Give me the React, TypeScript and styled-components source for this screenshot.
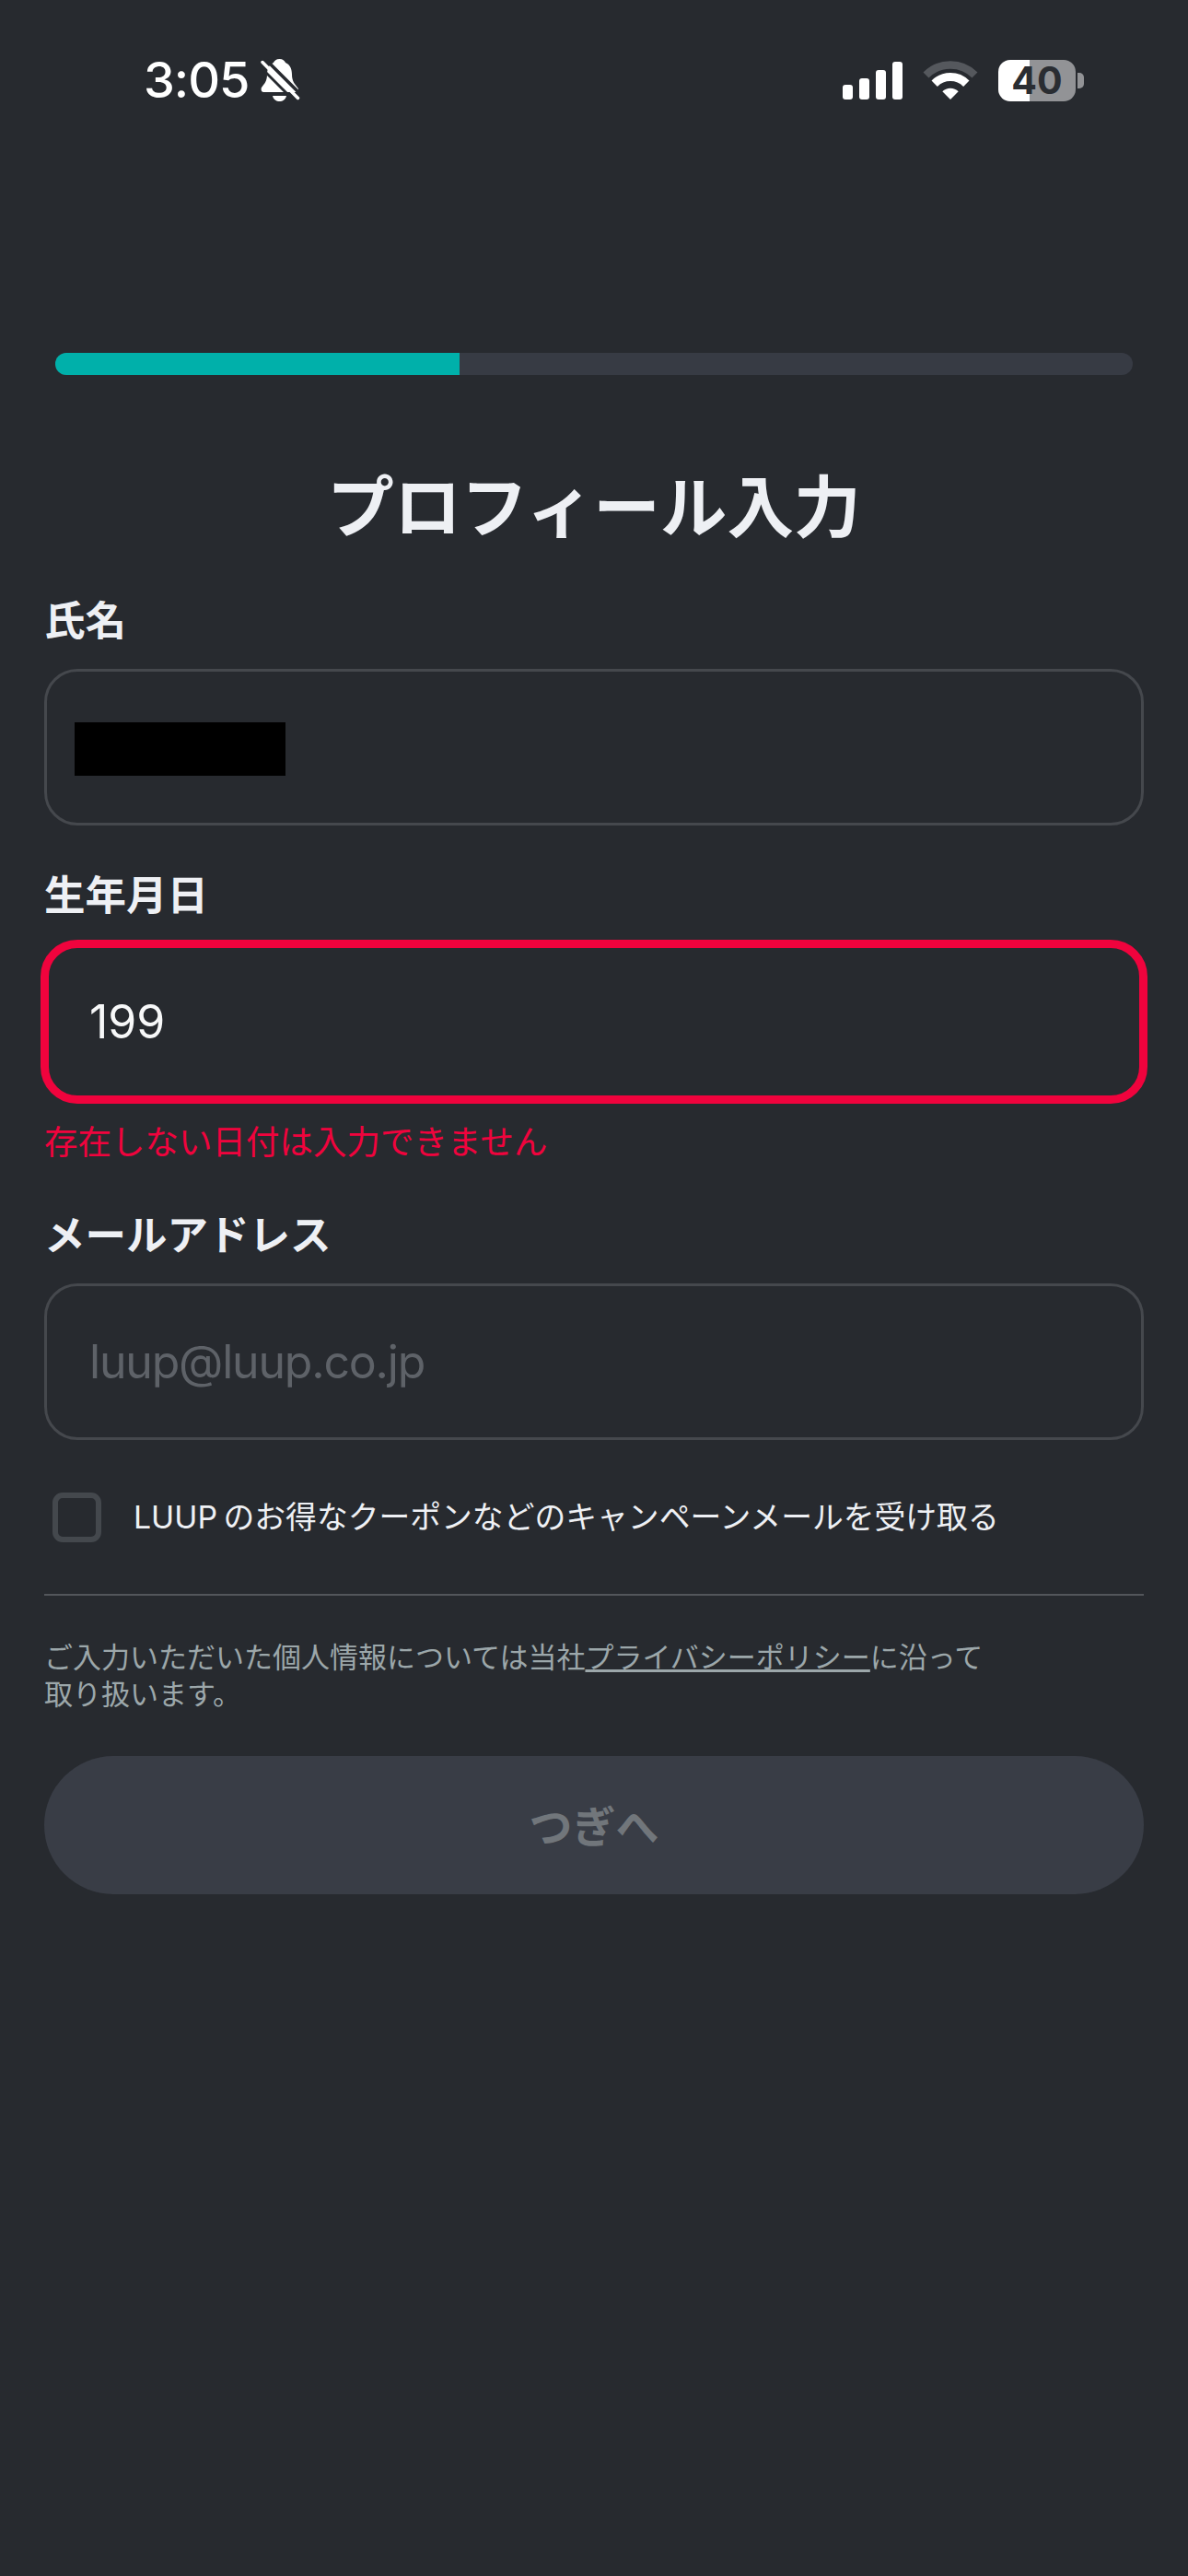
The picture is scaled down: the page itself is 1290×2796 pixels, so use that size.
import styled, { createGlobalStyle } from "styled-components";

const FONT = `Inter, "Noto Sans CJK JP", "Noto Sans", sans-serif`;

const GlobalStyle = createGlobalStyle`
  html, body { margin: 0; padding: 0; background: #272a2f; }
  * { box-sizing: border-box; }
`;

const Screen = styled.div`
  width: 1290px;
  height: 2796px;
  background: #272a2f;
  font-family: ${FONT};
  overflow: hidden;
`;

const StatusBar = styled.div`
  height: 176px;
  padding: 55px 122px 0 156px;
  display: flex;
  justify-content: space-between;
  align-items: flex-start;
  color: #fff;
`;

const TimeGroup = styled.div`
  display: flex;
  align-items: center;
  gap: 13px;
`;

const Time = styled.span`
  font-size: 54px;
  line-height: 64px;
  font-weight: 500;
  letter-spacing: -1px;
`;

const StatusIcons = styled.div`
  display: flex;
  align-items: center;
  gap: 22px;
  height: 64px;
`;

const ProgressTrack = styled.div`
  margin: 207px 60px 0;
  height: 24px;
  border-radius: 12px;
  background: #373b44;
  overflow: hidden;
`;

const ProgressFill = styled.div<{ $pct: number }>`
  width: ${(p) => p.$pct}%;
  height: 100%;
  background: #00b0aa;
`;

const Title = styled.h1`
  margin: 97px 0 0;
  text-align: center;
  font-size: 72.6px;
  line-height: 94px;
  font-weight: 700;
  color: #eef0f4;
`;

const Form = styled.div`
  padding: 0 48px;
`;

const Label = styled.div`
  margin-top: 44px;
  font-size: 44.5px;
  line-height: 64px;
  font-weight: 700;
  color: #eef0f4;
`;

const Field = styled.div<{ $error?: boolean }>`
  margin: ${(p) => (p.$error ? "16px -4px -4px" : "20px 0 0")};
  height: ${(p) => (p.$error ? "178px" : "170px")};
  padding: 0 ${(p) => (p.$error ? "44px" : "46px")};
  display: flex;
  align-items: center;
  border: ${(p) => (p.$error ? "9px solid #f0033d" : "3px solid #45484d")};
  border-radius: ${(p) => (p.$error ? "40px" : "36px")};
  font-size: 50px;
  color: #f7f8f9;
`;

const Masked = styled.div`
  width: 229px;
  height: 58px;
  margin: 4px 0 0 -16px;
  background: #000;
`;

const Placeholder = styled.span`
  color: #5e6268;
  letter-spacing: -1.2px;
`;

const ErrorText = styled.div`
  margin-top: 21px;
  font-size: 36.5px;
  line-height: 50px;
  color: #f0033d;
`;

const CheckRow = styled.div`
  margin-top: 57px;
  display: flex;
  align-items: center;
  gap: 35px;
  padding-left: 9px;
  font-size: 33.8px;
  line-height: 54px;
  word-spacing: -3px;
  color: #eef0f4;
`;

const CheckBox = styled.div`
  width: 53px;
  height: 54px;
  border: 6px solid #44484d;
  border-radius: 11px;
`;

const Divider = styled.div`
  margin-top: 56px;
  height: 2px;
  background: #53565b;
`;

const Note = styled.p`
  margin: 47px 0 0;
  font-size: 31px;
  line-height: 40px;
  color: #9ca7aa;

  a {
    color: inherit;
    text-decoration: underline;
  }
`;

const NextButton = styled.div`
  margin-top: 47px;
  height: 150px;
  padding-bottom: 4px;
  border-radius: 75px;
  background: #393d46;
  color: #71767b;
  font-size: 47px;
  font-weight: 700;
  display: flex;
  align-items: center;
  justify-content: center;
`;

const MutedBell = () => (
  <svg width="43" height="47" viewBox="0 0 43 47" fill="none">
    <path
      d="M20.5 0C24 0 26 2 27 4C32 6 34 11 34 17C34 24 37 27 40 31C42 33 41 36 38 36L3 36C1 36 0 33 1 31C4 27 7 24 7 17C7 11 9 6 14 4C15 2 17 0 20.500 0Z"
      fill="#fff"
    />
    <path d="M13 40H28C27 44 24 46 20.500 46C17 46 14 44 13 40Z" fill="#fff" />
    <path d="M5 0L44 39" stroke="#272a2f" strokeWidth="3.500" />
    <path d="M-2 7L36 45" stroke="#272a2f" strokeWidth="3" />
    <path d="M2 3.500L40.500 42.500" stroke="#fff" strokeWidth="3.500" strokeLinecap="round" />
  </svg>
);

const SignalIcon = () => (
  <svg width="65" height="41" viewBox="0 0 65 41" fill="#fff">
    <rect x="0" y="25" width="11" height="16" rx="3" />
    <rect x="18" y="18" width="11" height="23" rx="3" />
    <rect x="36" y="9" width="11" height="32" rx="3" />
    <rect x="54" y="0" width="11" height="41" rx="3" />
  </svg>
);

const WifiIcon = () => (
  <svg width="60" height="43" viewBox="0 0 60 43" fill="none">
    <path d="M3.500 15.500A37.500 37.500 0 0 1 56.500 15.500" stroke="#55585d" strokeWidth="8.500" />
    <path d="M12.700 24.700A24.500 24.500 0 0 1 47.300 24.700" stroke="#fff" strokeWidth="9" />
    <path d="M30 42L21.300 33.300A12.300 12.300 0 0 1 38.700 33.300Z" fill="#fff" />
  </svg>
);

const Battery = styled.div`
  position: relative;
  width: 84px;
  height: 45px;
  border-radius: 13px;
  background: linear-gradient(90deg, #fff 0 40%, #929396 40% 100%);
  display: flex;
  align-items: center;
  justify-content: center;
  font-size: 41px;
  font-weight: 700;
  color: #2a2d32;

  &::after {
    content: "";
    position: absolute;
    right: -9px;
    top: 14px;
    width: 7px;
    height: 17px;
    border-radius: 0 5px 5px 0;
    background: #929396;
  }
`;

export default function App() {
  return (
    <Screen>
      <GlobalStyle />
      <StatusBar>
        <TimeGroup>
          <Time>3:05</Time>
          <MutedBell />
        </TimeGroup>
        <StatusIcons>
          <SignalIcon />
          <WifiIcon />
          <Battery>40</Battery>
        </StatusIcons>
      </StatusBar>

      <ProgressTrack>
        <ProgressFill $pct={37.5} />
      </ProgressTrack>

      <Title>プロフィール入力</Title>

      <Form>
        <Label>氏名</Label>
        <Field>
          <Masked />
        </Field>

        <Label>生年月日</Label>
        <Field $error>199</Field>
        <ErrorText>存在しない日付は入力できません</ErrorText>

        <Label>メールアドレス</Label>
        <Field>
          <Placeholder>luup@luup.co.jp</Placeholder>
        </Field>

        <CheckRow>
          <CheckBox />
          <span>LUUP のお得なクーポンなどのキャンペーンメールを受け取る</span>
        </CheckRow>

        <Divider />

        <Note>
          ご入力いただいた個人情報については当社<a>プライバシーポリシー</a>に沿って
          <br />
          取り扱います。
        </Note>

        <NextButton>つぎへ</NextButton>
      </Form>
    </Screen>
  );
}
